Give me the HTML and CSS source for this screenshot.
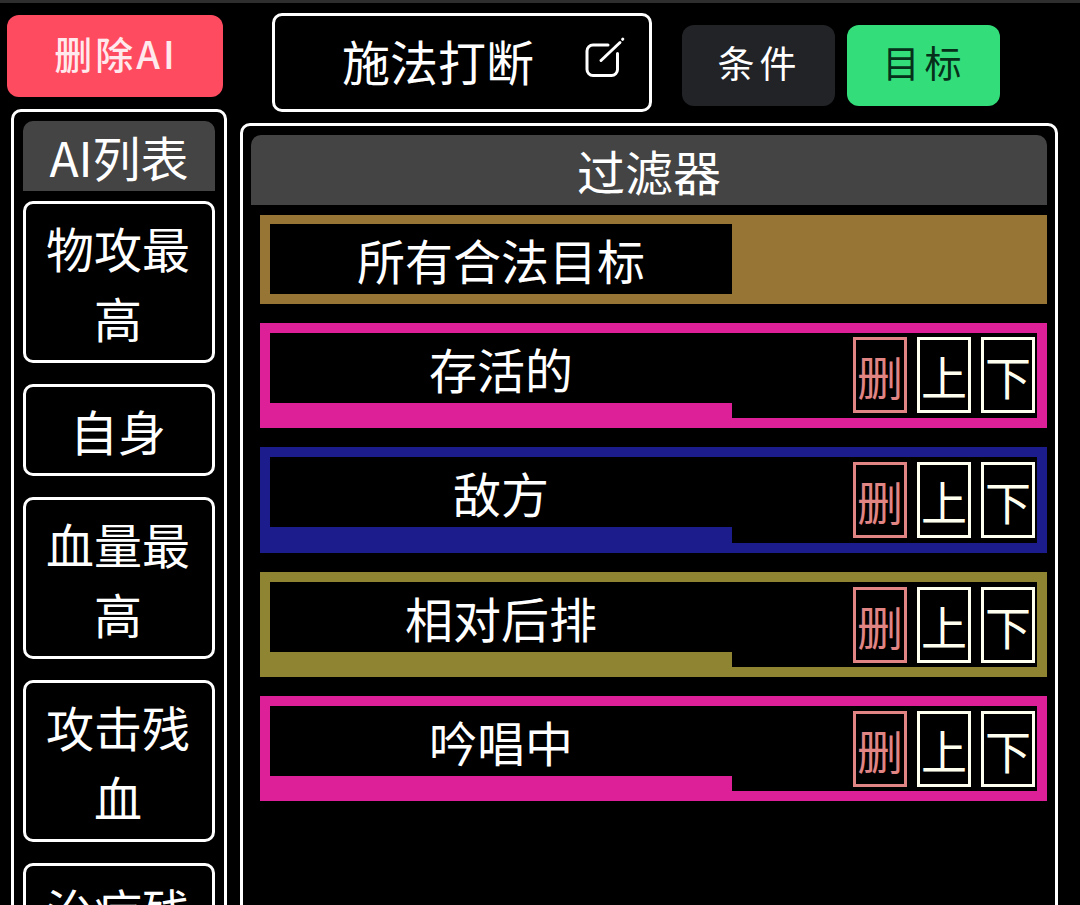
FILE: index.html
```html
<!DOCTYPE html>
<html lang="zh-CN">
<head>
    <meta charset="UTF-8">
    <meta name="viewport" content="width=device-width, initial-scale=1.0">
    <title>AI编辑</title>
    <link rel="stylesheet" href="styles.css">
</head>
<body>
    <div class="top-strip"></div>
    <div class="page">
        <div class="side">
            <button class="delete-ai">删除AI</button>
            <div class="ai-panel">
                <div class="ai-title">AI列表</div>
                <div class="ai-item">物攻最高</div>
                <div class="ai-item">自身</div>
                <div class="ai-item">血量最高</div>
                <div class="ai-item">攻击残血</div>
                <div class="ai-item">治疗残血</div>
            </div>
        </div>
        <div class="main">
            <div class="toolbar">
                <div class="name-box">
                    <span class="name-text">施法打断</span>
                    <svg class="edit-icon" width="42" height="42" viewBox="0 0 42 42" fill="none" stroke="#fff" stroke-width="3" stroke-linecap="round">
                        <path d="M25 9H10a6 6 0 0 0-6 6v18.5a6 6 0 0 0 6 6h18.5a6 6 0 0 0 6-6V17.5"/>
                        <path d="M18 24.5L37 6.5"/>
                        <path d="M39.6 3.3L39.8 3.1"/>
                    </svg>
                </div>
                <div class="tabs">
                    <button class="tab">条件</button>
                    <button class="tab tab-active">目标</button>
                </div>
            </div>
            <div class="filter-panel">
                <div class="filter-title">过滤器</div>
                <div class="filter-row filter-first">
                    <div class="filter-name">所有合法目标</div>
                </div>
                <div class="filter-row pink">
                    <div class="filter-name">存活的</div>
                    <div class="filter-actions">
                        <button class="act act-del">删</button>
                        <button class="act">上</button>
                        <button class="act">下</button>
                    </div>
                </div>
                <div class="filter-row navy">
                    <div class="filter-name">敌方</div>
                    <div class="filter-actions">
                        <button class="act act-del">删</button>
                        <button class="act">上</button>
                        <button class="act">下</button>
                    </div>
                </div>
                <div class="filter-row olive">
                    <div class="filter-name">相对后排</div>
                    <div class="filter-actions">
                        <button class="act act-del">删</button>
                        <button class="act">上</button>
                        <button class="act">下</button>
                    </div>
                </div>
                <div class="filter-row pink">
                    <div class="filter-name">吟唱中</div>
                    <div class="filter-actions">
                        <button class="act act-del">删</button>
                        <button class="act">上</button>
                        <button class="act">下</button>
                    </div>
                </div>
            </div>
        </div>
    </div>
</body>
</html>
```

FILE: styles.css
```css
html, body {
    height: 100%;
}
body {
    margin: 0;
    height: 905px;
    overflow: hidden;
    background-color: #000;
    color: #fff;
    font-family: "Noto Sans CJK SC", "Noto Sans", sans-serif;
}
button {
    font-family: inherit;
    padding: 0;
    cursor: pointer;
}
.top-strip {
    height: 3px;
    background-color: #2e2e2e;
}
.page {
    display: flex;
    align-items: flex-start;
    padding-left: 7px;
}
.side {
    width: 220px;
    margin-right: 13px;
    flex-shrink: 0;
}
.delete-ai {
    display: block;
    width: 216px;
    height: 82px;
    margin-top: 12px;
    padding: 0 0 8px 2px;
    border: none;
    border-radius: 12px;
    background-color: #ff4b60;
    color: #ffe9ec;
    font-size: 38px;
    font-weight: 500;
    letter-spacing: 3px;
}
.ai-panel {
    box-sizing: border-box;
    width: 216px;
    margin: 12px 0 0 4px;
    padding: 9px 9px;
    border: 3px solid #fff;
    border-radius: 10px;
}
.ai-title {
    height: 70px;
    line-height: 70px;
    text-align: center;
    font-size: 48px;
    background-color: #444;
    border-radius: 10px 10px 0 0;
}
.ai-item {
    box-sizing: border-box;
    margin-top: 10px;
    margin-bottom: 21px;
    padding: 8px 17px 8px 15px;
    border: 3px solid #fff;
    border-radius: 10px;
    font-size: 48px;
    line-height: 70px;
    text-align: center;
}
.ai-item + .ai-item {
    margin-top: 0;
}
.main {
    width: 818px;
    flex-shrink: 0;
}
.toolbar {
    display: flex;
    align-items: flex-start;
    padding: 10px 0 0 32px;
}
.name-box {
    box-sizing: border-box;
    display: flex;
    align-items: center;
    width: 380px;
    height: 99px;
    padding: 0 24px 0 67px;
    border: 3px solid #fff;
    border-radius: 10px;
}
.name-text {
    font-size: 48px;
    margin-bottom: 5px;
}
.edit-icon {
    margin-left: auto;
    margin-bottom: 12px;
}
.tabs {
    display: flex;
    gap: 12px;
    margin: 12px 0 0 30px;
}
.tab {
    width: 153px;
    height: 81px;
    padding: 0 0 8px 2px;
    border: none;
    border-radius: 12px;
    background-color: #212327;
    color: #fff;
    font-size: 37px;
    letter-spacing: 5px;
}
.tab-active {
    background-color: #33de7a;
    color: #06301a;
}
.filter-panel {
    box-sizing: border-box;
    height: 800px;
    margin-top: 11px;
    padding: 9px 8px;
    border: 3px solid #fff;
    border-radius: 10px;
}
.filter-title {
    height: 70px;
    line-height: 70px;
    text-align: center;
    font-size: 48px;
    background-color: #444;
    border-radius: 10px 10px 0 0;
}
.filter-row {
    display: flex;
    height: 105px;
    box-sizing: border-box;
    margin: 0 0 19px 9px;
    padding: 10px;
}
.filter-first {
    height: 89px;
    margin-top: 10px;
    padding-top: 9px;
    background-color: #967535;
}
.pink {
    background-color: #dd2098;
}
.navy {
    height: 106px;
    background-color: #1c1c8c;
}
.olive {
    background-color: #8e8432;
}
.filter-name {
    width: 462px;
    height: 70px;
    line-height: 70px;
    text-align: center;
    font-size: 48px;
    background-color: #000;
}
.filter-actions {
    flex: 1;
    display: flex;
    justify-content: flex-end;
    align-items: flex-start;
    gap: 10px;
    padding: 4px 2px 0 0;
    background-color: #000;
}
.navy .filter-actions,
.olive .filter-actions,
.olive + .pink .filter-actions {
    padding-top: 5px;
}
.act {
    box-sizing: border-box;
    width: 54px;
    height: 76px;
    border: 3px solid #fffff0;
    background-color: #000;
    color: #fffff0;
    font-size: 46px;
    line-height: 70px;
}
.act-del {
    border-color: #e08484;
    color: #e08484;
}
```
